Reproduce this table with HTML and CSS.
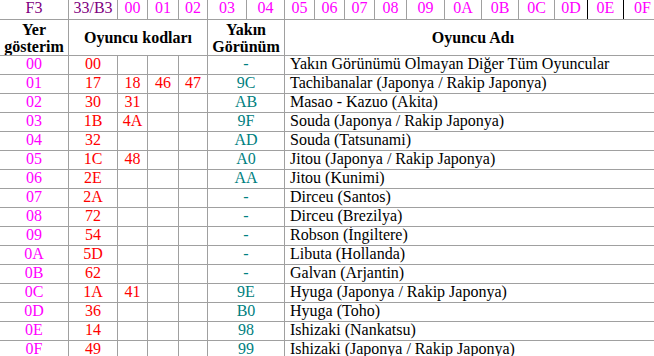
FILE: index.html
```html
<!DOCTYPE html>
<html lang="tr">
<head>
<meta charset="utf-8">
<title>Oyuncu kodları</title>
<link rel="stylesheet" href="styles.css">
</head>
<body>
<div class="sheet">
  <div class="c hp">F3</div>
  <div class="c hp">33/B3</div>
  <div class="c hm">00</div>
  <div class="c hm">01</div>
  <div class="c hm">02</div>
  <div class="c hm">03</div>
  <div class="c hm">04</div>
  <div class="c hm">05</div>
  <div class="c hm">06</div>
  <div class="c hm">07</div>
  <div class="c hm">08</div>
  <div class="c hm">09</div>
  <div class="c hm">0A</div>
  <div class="c hm">0B</div>
  <div class="c hm">0C</div>
  <div class="c hm">0D</div>
  <div class="c hm dark">0E</div>
  <div class="c hm dark">0F</div>

  <div class="c th">Yer<br>gösterim</div>
  <div class="c th span4">Oyuncu kodları</div>
  <div class="c th span2">Yakın<br>Görünüm</div>
  <div class="c th span11">Oyuncu Adı</div>

  <div class="c idx">00</div><div class="c code">00</div><div class="c code"></div><div class="c code"></div><div class="c code"></div><div class="c near span2">-</div><div class="c name span11">Yakın Görünümü Olmayan Diğer Tüm Oyuncular</div>
  <div class="c idx">01</div><div class="c code">17</div><div class="c code">18</div><div class="c code">46</div><div class="c code">47</div><div class="c near span2">9C</div><div class="c name span11">Tachibanalar (Japonya / Rakip Japonya)</div>
  <div class="c idx">02</div><div class="c code">30</div><div class="c code">31</div><div class="c code"></div><div class="c code"></div><div class="c near span2">AB</div><div class="c name span11">Masao - Kazuo (Akita)</div>
  <div class="c idx">03</div><div class="c code">1B</div><div class="c code">4A</div><div class="c code"></div><div class="c code"></div><div class="c near span2">9F</div><div class="c name span11">Souda (Japonya / Rakip Japonya)</div>
  <div class="c idx">04</div><div class="c code">32</div><div class="c code"></div><div class="c code"></div><div class="c code"></div><div class="c near span2">AD</div><div class="c name span11">Souda (Tatsunami)</div>
  <div class="c idx">05</div><div class="c code">1C</div><div class="c code">48</div><div class="c code"></div><div class="c code"></div><div class="c near span2">A0</div><div class="c name span11">Jitou (Japonya / Rakip Japonya)</div>
  <div class="c idx">06</div><div class="c code">2E</div><div class="c code"></div><div class="c code"></div><div class="c code"></div><div class="c near span2">AA</div><div class="c name span11">Jitou (Kunimi)</div>
  <div class="c idx">07</div><div class="c code">2A</div><div class="c code"></div><div class="c code"></div><div class="c code"></div><div class="c near span2">-</div><div class="c name span11">Dirceu (Santos)</div>
  <div class="c idx">08</div><div class="c code">72</div><div class="c code"></div><div class="c code"></div><div class="c code"></div><div class="c near span2">-</div><div class="c name span11">Dirceu (Brezilya)</div>
  <div class="c idx">09</div><div class="c code">54</div><div class="c code"></div><div class="c code"></div><div class="c code"></div><div class="c near span2">-</div><div class="c name span11">Robson (İngiltere)</div>
  <div class="c idx">0A</div><div class="c code">5D</div><div class="c code"></div><div class="c code"></div><div class="c code"></div><div class="c near span2">-</div><div class="c name span11">Libuta (Hollanda)</div>
  <div class="c idx">0B</div><div class="c code">62</div><div class="c code"></div><div class="c code"></div><div class="c code"></div><div class="c near span2">-</div><div class="c name span11">Galvan (Arjantin)</div>
  <div class="c idx">0C</div><div class="c code">1A</div><div class="c code">41</div><div class="c code"></div><div class="c code"></div><div class="c near span2">9E</div><div class="c name span11">Hyuga (Japonya / Rakip Japonya)</div>
  <div class="c idx">0D</div><div class="c code">36</div><div class="c code"></div><div class="c code"></div><div class="c code"></div><div class="c near span2">B0</div><div class="c name span11">Hyuga (Toho)</div>
  <div class="c idx">0E</div><div class="c code">14</div><div class="c code"></div><div class="c code"></div><div class="c code"></div><div class="c near span2">98</div><div class="c name span11">Ishizaki (Nankatsu)</div>
  <div class="c idx">0F</div><div class="c code">49</div><div class="c code"></div><div class="c code"></div><div class="c code"></div><div class="c near span2">99</div><div class="c name span11">Ishizaki (Japonya / Rakip Japonya)</div>
</div>
</body>
</html>
```
FILE: styles.css
```css
html, body {
  margin: 0;
  padding: 0;
  background: #ffffff;
  overflow: hidden;
}

body {
  font-family: "Liberation Serif", "Times New Roman", serif;
  font-size: 16px;
  color: #000000;
}

.sheet {
  display: grid;
  width: max-content;
  grid-template-columns: 68px 48px 29px 30px 28px 38px 37px 29px 29px 29px 31px 37px 36px 36px 35px 32px 35px 37px;
  grid-template-rows: 19px 35px;
  grid-auto-rows: 18px;
  gap: 1px;
  background: #a0a0a0;
}

.c {
  background: #ffffff;
  text-align: center;
  line-height: 16px;
  white-space: nowrap;
  overflow: hidden;
}

.hp {
  color: #800080;
}

.hm {
  color: #ff00ff;
}

.dark {
  margin-left: -1px;
  border-left: 1px solid #000000;
}

.th {
  font-weight: bold;
  line-height: 17px;
  display: flex;
  flex-direction: column;
  justify-content: center;
}

.span2 { grid-column: span 2; }
.span4 { grid-column: span 4; }
.span11 { grid-column: span 11; }

.idx { color: #ff00ff; }
.code { color: #ff0000; }
.near { color: #008080; }

.name {
  text-align: left;
  padding-left: 5px;
}
```
